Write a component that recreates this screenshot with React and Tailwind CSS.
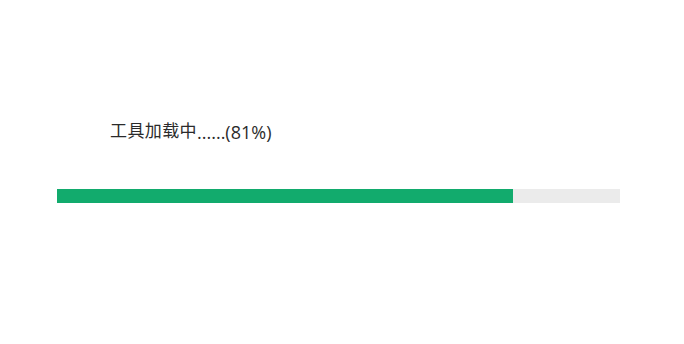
import React from "react";

export default function App() {
  const pct = 81;
  return (
    <div className="w-[684px] h-[344px] bg-white px-[57px] pt-[118px]">
      <div
        className="ml-[53px] h-[24px] leading-[24px] text-[#2b2b2b] whitespace-nowrap"
        style={{ fontFamily: '"Open Sans", "Noto Sans CJK SC", sans-serif' }}
      >
        <span
          className="text-[17px] tracking-[0.4px] align-[2px]"
          style={{ fontFamily: '"Noto Sans CJK SC", sans-serif' }}
        >
          工具加载中
        </span>
        <span className="text-[18px]">......({pct}%)</span>
      </div>
      <div className="mt-[47px] w-[563px] h-[14px] bg-[#ebebeb]">
        <div className="h-full bg-[#12ab6d]" style={{ width: `${pct}%` }} />
      </div>
    </div>
  );
}
